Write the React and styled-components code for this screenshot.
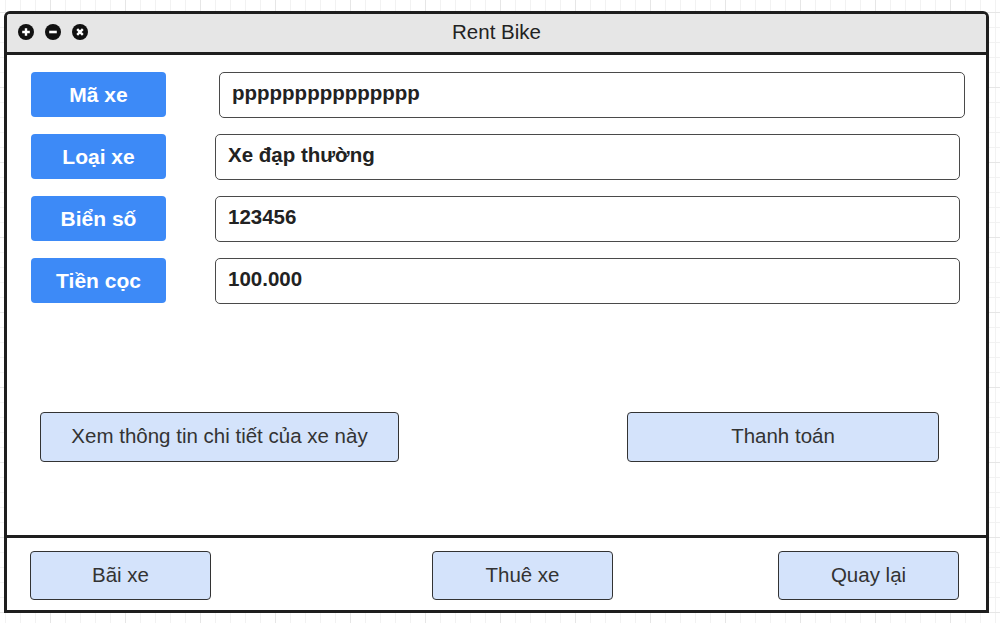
import React from "react";
import styled, { createGlobalStyle } from "styled-components";

const Global = createGlobalStyle`
  html, body { margin: 0; padding: 0; }
  body {
    width: 1000px;
    height: 623px;
    overflow: hidden;
    font-family: "Liberation Sans", Arial, sans-serif;
    background-color: #ffffff;
    background-image:
      linear-gradient(to right, #e6e6e6 1px, transparent 1px),
      linear-gradient(to bottom, #e6e6e6 1px, transparent 1px),
      linear-gradient(to right, #f2f2f2 1px, transparent 1px),
      linear-gradient(to bottom, #f2f2f2 1px, transparent 1px);
    background-size: 75px 75px, 75px 75px, 15px 15px, 15px 15px;
    background-position: 50px 12px, 50px 12px, 5px 12px, 5px 12px;
  }
`;

const Window = styled.div`
  box-sizing: border-box;
  margin: 11px 0 0 4px;
  width: 985px;
  height: 602px;
  border: 3px solid #1e1e1e;
  border-radius: 6px 6px 0 0;
  background: #ffffff;
  display: flex;
  flex-direction: column;
`;

const TitleBar = styled.div`
  height: 38px;
  flex: none;
  background: #e6e6e6;
  border-bottom: 3px solid #1e1e1e;
  border-radius: 3px 3px 0 0;
  position: relative;
  display: flex;
  align-items: center;
  justify-content: center;
`;

const Controls = styled.div`
  position: absolute;
  left: 11px;
  top: 10px;
  display: flex;
  gap: 11px;
`;

const Title = styled.div`
  font-size: 20.5px;
  color: #222;
  margin-top: -2px;
`;

const Main = styled.div`
  flex: 1;
  padding: 17px 0 0 24px;
  display: flex;
  flex-direction: column;
`;

const Fields = styled.div`
  display: flex;
  flex-direction: column;
  gap: 17px;
`;

const Row = styled.div`
  display: flex;
  align-items: flex-start;
  height: 45px;
`;

const Label = styled.div`
  box-sizing: border-box;
  width: 135px;
  height: 45px;
  flex: none;
  background: #3d8af7;
  border-radius: 4px;
  color: #fff;
  font-weight: bold;
  font-size: 21px;
  display: flex;
  align-items: center;
  justify-content: center;
`;

const Field = styled.div`
  box-sizing: border-box;
  margin-left: ${(p) => p.$offset}px;
  width: ${(p) => p.$width}px;
  height: 46px;
  border: 1.6px solid #4a4a4a;
  border-radius: 5px;
  padding: 0 0 4px 12px;
  display: flex;
  align-items: center;
  font-weight: bold;
  font-size: 20.5px;
  color: #222;
`;

const Actions = styled.div`
  margin-top: 109px;
  display: flex;
  align-items: flex-start;
  padding-left: 9px;
`;

const Button = styled.div`
  box-sizing: border-box;
  width: ${(p) => p.$width}px;
  height: ${(p) => p.$height}px;
  margin-left: ${(p) => p.$ml || 0}px;
  margin-top: ${(p) => p.$mt || 0}px;
  background: #d4e3fb;
  border: 1.5px solid #333;
  border-radius: 4px;
  color: #333;
  font-size: 20.5px;
  display: flex;
  align-items: center;
  justify-content: center;
  padding-bottom: 2px;
`;

const Footer = styled.div`
  flex: none;
  border-top: 3px solid #1e1e1e;
  padding: 13px 0 0 23px;
  box-sizing: border-box;
  height: 75px;
  display: flex;
  align-items: flex-start;
`;

const CircleIcon = ({ kind }) => (
  <svg width="16" height="16" viewBox="0 0 16 16">
    <circle cx="8" cy="8" r="8" fill="#111" />
    {kind === "plus" && (
      <path d="M8 4.2v7.6M4.2 8h7.6" stroke="#fff" strokeWidth="2.4" />
    )}
    {kind === "minus" && <path d="M4.2 8h7.6" stroke="#fff" strokeWidth="2.6" />}
    {kind === "close" && (
      <path d="M5.2 5.2l5.6 5.6M10.8 5.2l-5.6 5.6" stroke="#fff" strokeWidth="2.4" />
    )}
  </svg>
);

const rows = [
  { label: "Mã xe", value: "ppppppppppppppp", offset: 53, width: 746 },
  { label: "Loại xe", value: "Xe đạp thường", offset: 49, width: 745 },
  { label: "Biển số", value: "123456", offset: 49, width: 745 },
  { label: "Tiền cọc", value: "100.000", offset: 49, width: 745 },
];

export default function App() {
  return (
    <>
      <Global />
      <Window>
        <TitleBar>
          <Controls>
            <CircleIcon kind="plus" />
            <CircleIcon kind="minus" />
            <CircleIcon kind="close" />
          </Controls>
          <Title>Rent Bike</Title>
        </TitleBar>
        <Main>
          <Fields>
            {rows.map((r) => (
              <Row key={r.label}>
                <Label>{r.label}</Label>
                <Field $offset={r.offset} $width={r.width}>
                  {r.value}
                </Field>
              </Row>
            ))}
          </Fields>
          <Actions>
            <Button $width={359} $height={50}>
              Xem thông tin chi tiết của xe này
            </Button>
            <Button $width={312} $height={50} $ml={228}>
              Thanh toán
            </Button>
          </Actions>
        </Main>
        <Footer>
          <Button $width={181} $height={49}>Bãi xe</Button>
          <Button $width={181} $height={49} $ml={221}>Thuê xe</Button>
          <Button $width={181} $height={49} $ml={165}>Quay lại</Button>
        </Footer>
      </Window>
    </>
  );
}
